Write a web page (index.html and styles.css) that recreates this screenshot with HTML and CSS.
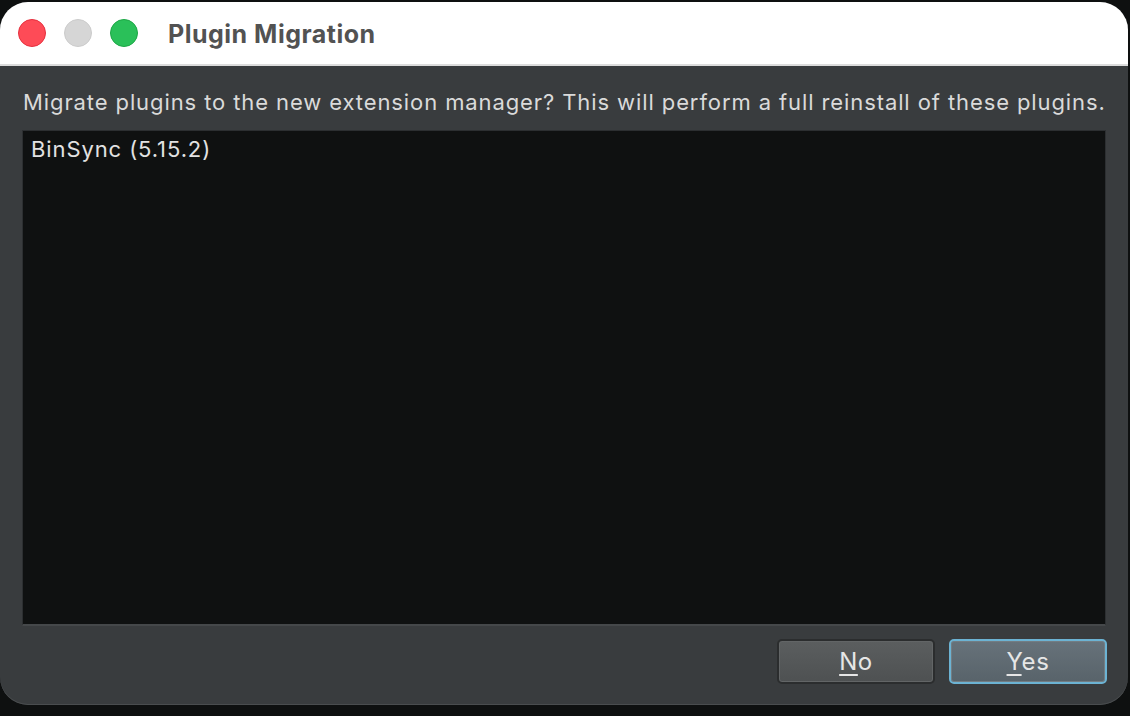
FILE: index.html
```html
<!DOCTYPE html>
<html lang="en">
<head>
    <meta charset="UTF-8">
    <meta name="viewport" content="width=device-width, initial-scale=1.0">
    <title>Plugin Migration</title>
    <link rel="stylesheet" href="styles.css">
</head>
<body>
    <div class="window">
        <div class="titlebar">
            <div class="lights">
                <span class="light close"></span>
                <span class="light minimize"></span>
                <span class="light zoom"></span>
            </div>
            <h1 class="title">Plugin Migration</h1>
        </div>

        <div class="content">
            <p class="message">Migrate plugins to the new extension manager? This will perform a full reinstall of these plugins.</p>

            <ul class="plugin-list">
                <li>BinSync (5.15.2)</li>
            </ul>

            <div class="actions">
                <button class="btn"><u>N</u>o</button>
                <button class="btn btn-default"><u>Y</u>es</button>
            </div>
        </div>
    </div>
</body>
</html>
```

FILE: styles.css
```css
* {
    box-sizing: border-box;
    margin: 0;
    padding: 0;
}

html, body {
    height: 100%;
}

body {
    font-family: Inter, "Liberation Sans", sans-serif;
    background-color: #0e1010;
    padding: 2px 2px 11px 0;
}

.window {
    height: 100%;
    display: flex;
    flex-direction: column;
    border-radius: 28px;
    overflow: hidden;
    background: #393c3e;
    box-shadow: inset 0 -1px 0 #4a4d4f;
}

.titlebar {
    height: 64px;
    flex: none;
    background: #ffffff;
    border-bottom: 2px solid #dcdcdc;
    display: flex;
    align-items: center;
    padding-left: 18px;
}

.lights {
    display: flex;
    gap: 18px;
    margin-right: 30px;
}

.light {
    width: 28px;
    height: 28px;
    border-radius: 50%;
    border: 1px solid transparent;
}

.light.close {
    background: #fe4b57;
    border-color: #e5303e;
}

.light.minimize {
    background: #d6d6d6;
    border-color: #cbcbcb;
}

.light.zoom {
    background: #2ac059;
    border-color: #1ca645;
}

.title {
    font-size: 25px;
    font-weight: 700;
    color: #525252;
    letter-spacing: 0.5px;
    margin-top: 2px;
}

.content {
    flex: 1;
    display: flex;
    flex-direction: column;
    padding: 21px 22px 21px 22px;
}

.message {
    font-size: 22px;
    line-height: 30px;
    letter-spacing: 0.9px;
    color: #dadada;
    padding-left: 1px;
    margin-bottom: 13px;
    white-space: nowrap;
}

.plugin-list {
    flex: 1;
    list-style: none;
    background: #0f1111;
    border: 1px solid #2c2f31;
    border-bottom: 2px solid #45484a;
    padding: 3px 8px;
    margin-bottom: 13px;
}

.plugin-list li {
    font-size: 22px;
    line-height: 30px;
    letter-spacing: 0.9px;
    color: #e2e2e2;
}

.actions {
    display: flex;
    justify-content: flex-end;
    gap: 14px;
    margin-right: -1px;
}

.btn {
    width: 158px;
    height: 45px;
    font-family: inherit;
    font-size: 24px;
    letter-spacing: 0.6px;
    color: #e6e6e6;
    background: linear-gradient(#5b5e5f, #4e5152);
    border: 2px solid #2b2d2e;
    border-radius: 5px;
    box-shadow: inset 0 0 0 1px #626566;
    cursor: pointer;
}

.btn u {
    text-decoration-thickness: 2px;
    text-underline-offset: 4px;
}

.btn-default {
    background: linear-gradient(#67727a, #58636a);
    border-color: #6cb3d3;
    box-shadow: inset 0 0 0 1px #737d83;
}
```
